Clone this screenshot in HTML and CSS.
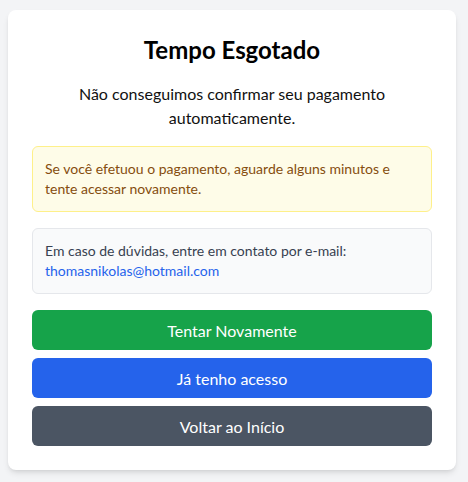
FILE: index.html
```html
<!DOCTYPE html>
<html lang="pt-BR">
<head>
  <meta charset="UTF-8" />
  <meta name="viewport" content="width=device-width, initial-scale=1.0" />
  <title>Tempo Esgotado</title>
  <link rel="stylesheet" href="styles.css">
</head>
<body>
  <div class="card">
    <h1>Tempo Esgotado</h1>
    <p class="lead">Não conseguimos confirmar seu pagamento automaticamente.</p>

    <div class="notice notice-warning">
      Se você efetuou o pagamento, aguarde alguns minutos e tente acessar novamente.
    </div>

    <div class="notice notice-info">
      Em caso de dúvidas, entre em contato por e-mail:<br>
      <a href="mailto:thomasnikolas@hotmail.com">thomasnikolas@hotmail.com</a>
    </div>

    <div class="actions">
      <button class="btn btn-green">Tentar Novamente</button>
      <button class="btn btn-blue">Já tenho acesso</button>
      <button class="btn btn-gray">Voltar ao Início</button>
    </div>
  </div>
</body>
</html>
```

FILE: styles.css
```css
body {
  font-family: Lato, "Noto Sans", sans-serif;
  background-color: #f3f4f6;
  margin: 0;
  padding: 10px 8px;
}

.card {
  width: 448px;
  box-sizing: border-box;
  background: #fff;
  padding: 24px;
  border-radius: 8px;
  box-shadow: 0 4px 6px -1px rgba(0, 0, 0, 0.1), 0 2px 4px -2px rgba(0, 0, 0, 0.1);
  text-align: center;
}

h1 {
  font-size: 24px;
  line-height: 32px;
  font-weight: 700;
  color: #000;
  margin: 0 0 16px;
}

.lead {
  font-size: 16px;
  line-height: 24px;
  color: #111;
  margin: 0 0 16px;
}

.notice {
  text-align: left;
  font-size: 14px;
  line-height: 20px;
  padding: 12px;
  border: 1px solid;
  border-radius: 6px;
  margin-bottom: 16px;
}

.notice-warning {
  background-color: #fefce8;
  border-color: #fef08a;
  color: #854d0e;
}

.notice-info {
  background-color: #f9fafb;
  border-color: #e5e7eb;
  color: #374151;
}

.notice-info a {
  color: #2563eb;
  text-decoration: none;
}

.actions {
  display: flex;
  flex-direction: column;
  gap: 8px;
}

.btn {
  height: 40px;
  border: none;
  border-radius: 6px;
  color: #fff;
  font-family: inherit;
  font-size: 16px;
  cursor: pointer;
}

.btn-green {
  background-color: #16a34a;
}

.btn-blue {
  background-color: #2563eb;
}

.btn-gray {
  background-color: #4b5563;
}
```
